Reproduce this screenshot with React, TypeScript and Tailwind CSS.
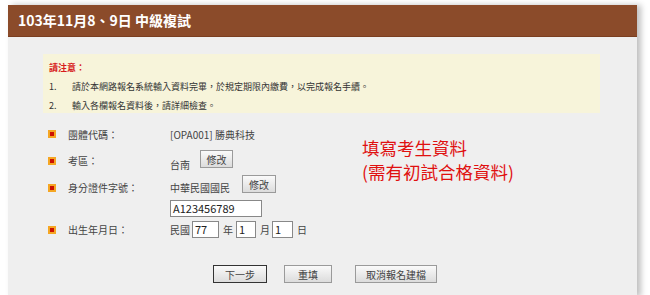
import React from "react";

const font = { fontFamily: '"Noto Sans CJK TC", "Noto Sans", sans-serif' };

function Bullet() {
  return (
    <span className="inline-flex h-[8px] w-[8px] items-center justify-center bg-[#f5a623]">
      <span className="h-[4px] w-[4px] bg-[#cc1100]" />
    </span>
  );
}

function Btn({ children, w, dark }: { children: React.ReactNode; w: string; dark?: boolean }) {
  return (
    <button
      className={`${w} flex h-[18px] items-center justify-center border bg-gradient-to-b from-[#fafafa] to-[#dcdcdc] text-[10px] text-[#444] ${
        dark ? "border-[#333] border-[1.5px]" : "border-[#9a9a9a]"
      }`}
    >
      {children}
    </button>
  );
}

export default function App() {
  return (
    <div className="h-[295px] w-[650px] overflow-hidden bg-white pt-[5px] pl-[8px]" style={font}>
      <div className="relative w-[629px] shadow-[4px_0_6px_rgba(0,0,0,0.25)]">
        <div className="flex h-[32px] items-center border-b border-[#7a3e20] bg-[#8b4b2a] pl-[10px] text-[14px] font-bold text-white">
          103年11月8、9日 中級複試
        </div>
        <div className="h-[260px] bg-[#efefef] pt-[17px]">
          <div className="ml-[35px] h-[59px] w-[557px] bg-[#f7f4da] pl-[6px] pt-[4px] text-[9px] leading-[19px] text-[#333]">
            <div className="font-bold text-[#d81b1b]">請注意：</div>
            <div className="flex">
              <span className="w-[23px]">1.</span>
              <span>請於本網路報名系統輸入資料完畢，於規定期限內繳費，以完成報名手續。</span>
            </div>
            <div className="flex">
              <span className="w-[23px]">2.</span>
              <span>輸入各欄報名資料後，請詳細檢查。</span>
            </div>
          </div>

          <div className="relative mt-[14px] text-[10px] text-[#444]">
            <div className="absolute left-[354px] top-[9px] text-[17.5px] leading-[24px] text-[#e01010]">
              <div>填寫考生資料</div>
              <div>(需有初試合格資料)</div>
            </div>

            <div className="flex h-[14px] items-center">
              <div className="flex w-[162px] items-center pl-[40px]">
                <Bullet />
                <span className="ml-[12px]">團體代碼：</span>
              </div>
              <span>[OPA001] 勝典科技</span>
            </div>

            <div className="mt-[9px] flex items-start">
              <div className="flex w-[162px] items-center pl-[40px] pt-[3px]">
                <Bullet />
                <span className="ml-[12px]">考區：</span>
              </div>
              <span className="mt-[7px]">台南</span>
              <div className="ml-[10px]">
                <Btn w="w-[33px]">修改</Btn>
              </div>
            </div>

            <div className="mt-[7px] flex items-start">
              <div className="flex w-[162px] items-center pl-[40px] pt-[1px]">
                <Bullet />
                <span className="ml-[12px]">身分證件字號：</span>
              </div>
              <div className="-mt-[4px]">
                <div className="flex items-start">
                  <span className="mt-[5px]">中華民國國民</span>
                  <div className="ml-[12px]">
                    <Btn w="w-[34px]">修改</Btn>
                  </div>
                </div>
                <div className="mt-[5px] flex h-[17px] w-[92px] items-center border border-[#888] bg-white pl-[2px] text-[11px] text-[#222]">
                  A123456789
                </div>
              </div>
            </div>

            <div className="mt-[4px] flex items-center">
              <div className="flex w-[162px] items-center pl-[40px]">
                <Bullet />
                <span className="ml-[12px]">出生年月日：</span>
              </div>
              <span>民國</span>
              <div className="ml-[2px] flex h-[17px] w-[27px] items-center border border-[#888] bg-white pl-[2px] text-[11px] text-[#222]">77</div>
              <span className="ml-[4px]">年</span>
              <div className="ml-[3px] flex h-[17px] w-[20px] items-center border border-[#888] bg-white pl-[2px] text-[11px] text-[#222]">1</div>
              <span className="ml-[4px]">月</span>
              <div className="ml-[2px] flex h-[17px] w-[21px] items-center border border-[#888] bg-white pl-[2px] text-[11px] text-[#222]">1</div>
              <span className="ml-[4px]">日</span>
            </div>

            <div className="mt-[27px] flex">
              <div className="ml-[205px]">
                <Btn w="w-[54px]" dark>下一步</Btn>
              </div>
              <div className="ml-[17px]">
                <Btn w="w-[48px]">重填</Btn>
              </div>
              <div className="ml-[23px]">
                <Btn w="w-[82px]">取消報名建檔</Btn>
              </div>
            </div>
          </div>
        </div>
      </div>
    </div>
  );
}
